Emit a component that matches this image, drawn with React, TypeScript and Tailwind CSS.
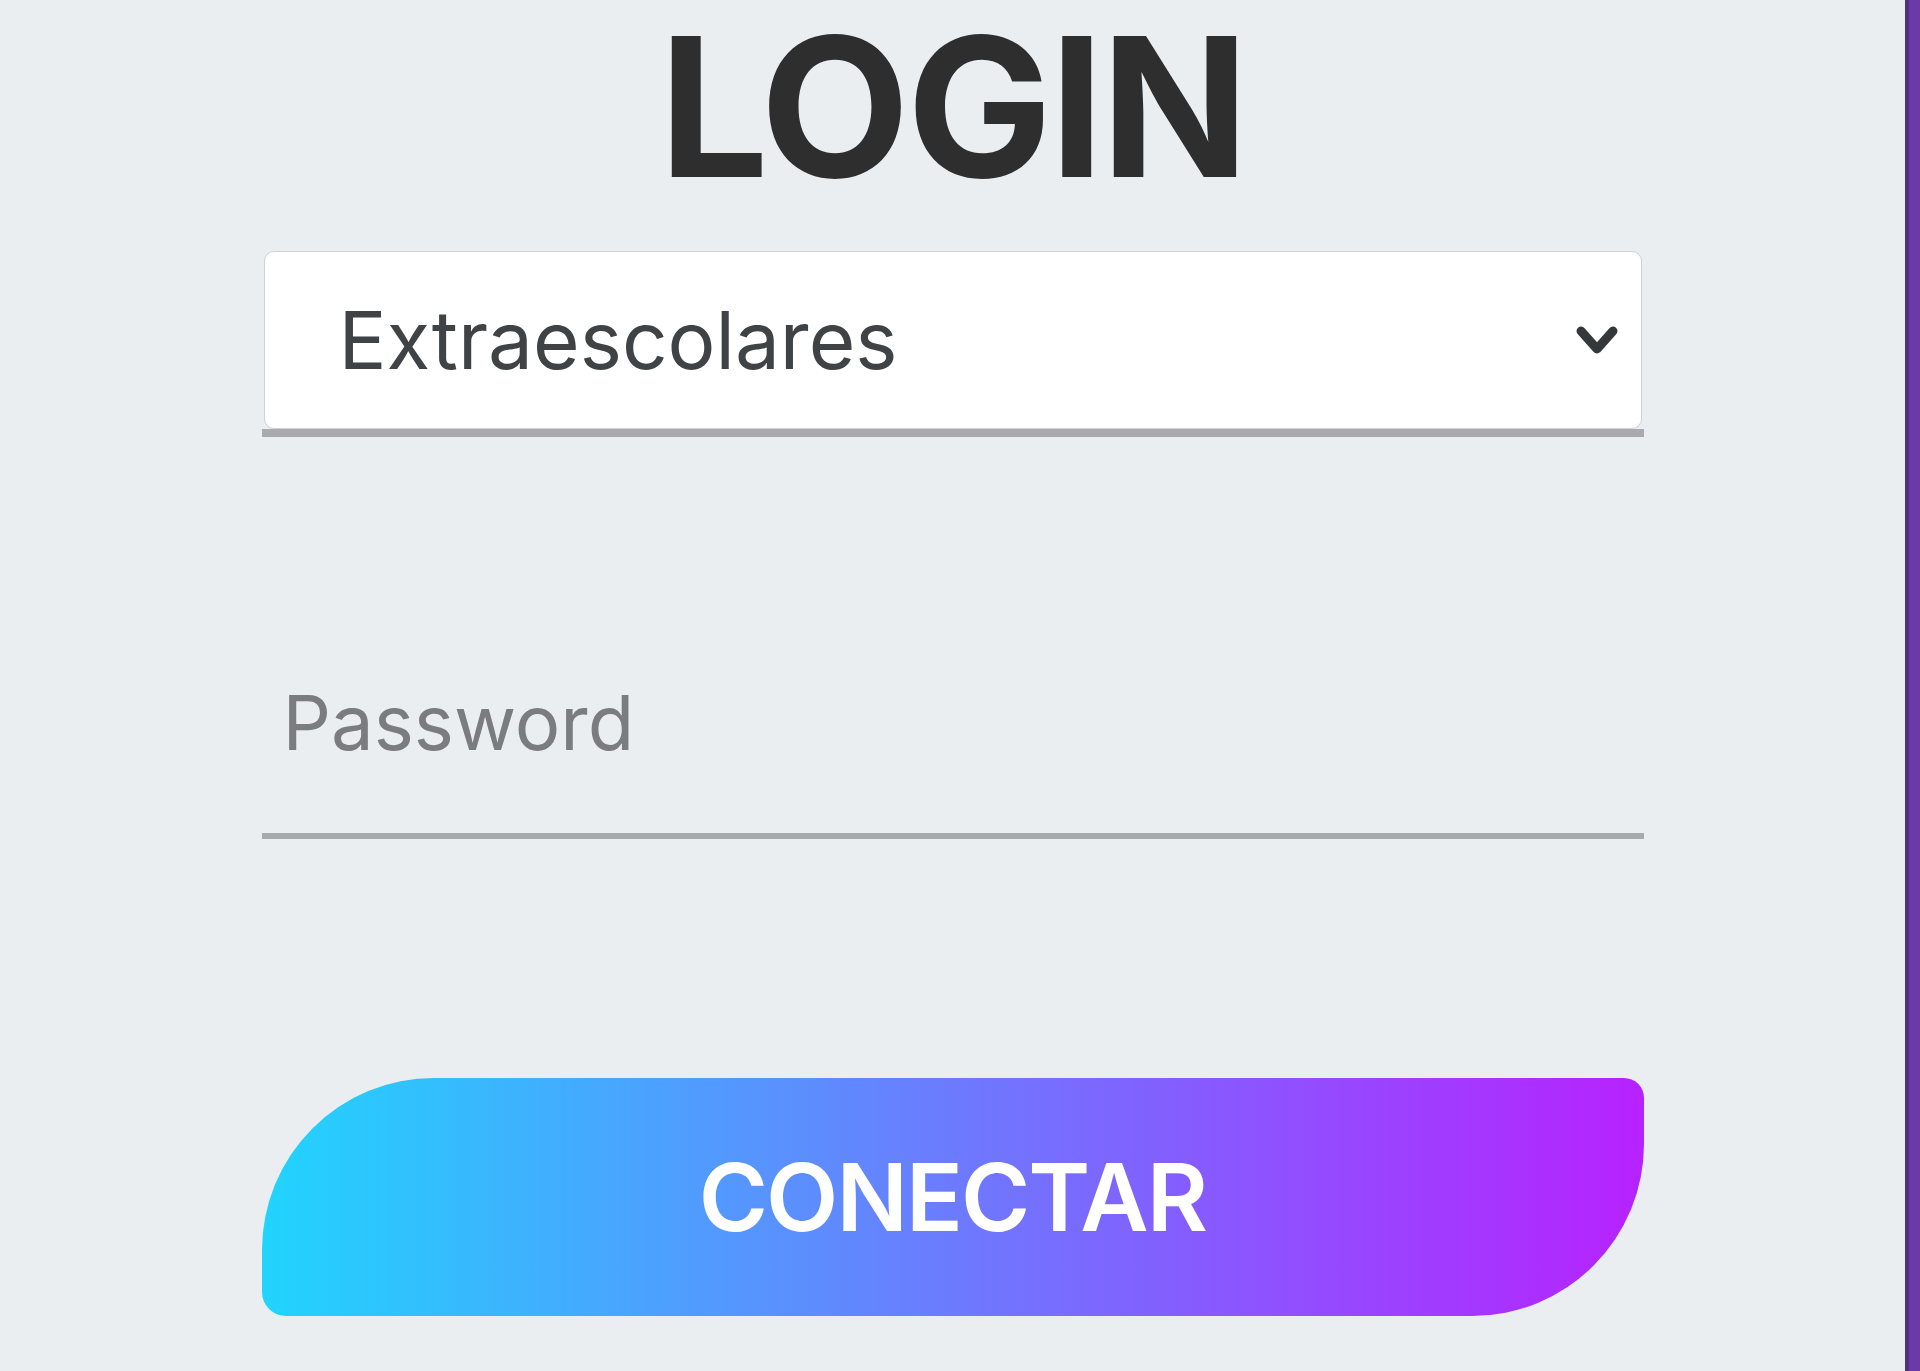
import React from "react";

export default function App() {
  return (
    <div className="flex min-h-screen w-full bg-[#ebeef1] font-['Inter','Noto_Sans',sans-serif]">
      <main className="flex flex-1 flex-col items-center">
        <h1 className="px-[8px] text-[194px] font-bold leading-[1.1] tracking-[-0.015em] text-[#2e2e2e]">
          LOGIN
        </h1>

        <div className="relative mt-[38px] w-[1382px] border-b-[8px] border-[#a8aaad] px-[2px]">
          <select
            defaultValue="extra"
            className="block h-[178px] w-full appearance-none rounded-[10px] border border-[#cfd2d5] bg-white pl-[74px] text-[80px] text-[#404346] outline-none"
          >
            <option value="extra">Extraescolares</option>
          </select>
          <svg
            className="pointer-events-none absolute right-[24px] top-[71px]"
            width="46"
            height="36"
            viewBox="0 0 46 36"
            fill="none"
          >
            <path
              d="M7 9 L23 27 L39 9"
              stroke="#35383b"
              strokeWidth="9"
              strokeLinecap="round"
              strokeLinejoin="round"
            />
          </svg>
        </div>

        <input
          type="password"
          placeholder="Password"
          className="mt-[174px] box-border h-[228px] w-[1382px] border-b-[6px] border-[#a7aaad] bg-transparent pl-[21px] text-[76px] text-[#404346] outline-none placeholder:text-[#7a7c7f]"
        />

        <button
          type="button"
          className="mt-[239px] flex h-[238px] w-[1382px] items-center justify-center rounded-tl-[172px] rounded-tr-[20px] rounded-br-[172px] rounded-bl-[24px] bg-linear-to-r/srgb from-[#21D4FD] to-[#B721FF] text-[94px] font-semibold tracking-[-0.02em] text-white"
        >
          CONECTAR
        </button>
      </main>
      <div className="w-[15px] shrink-0 border-l-[4px] border-[#523082] bg-[#6b3aa6]" />
    </div>
  );
}
